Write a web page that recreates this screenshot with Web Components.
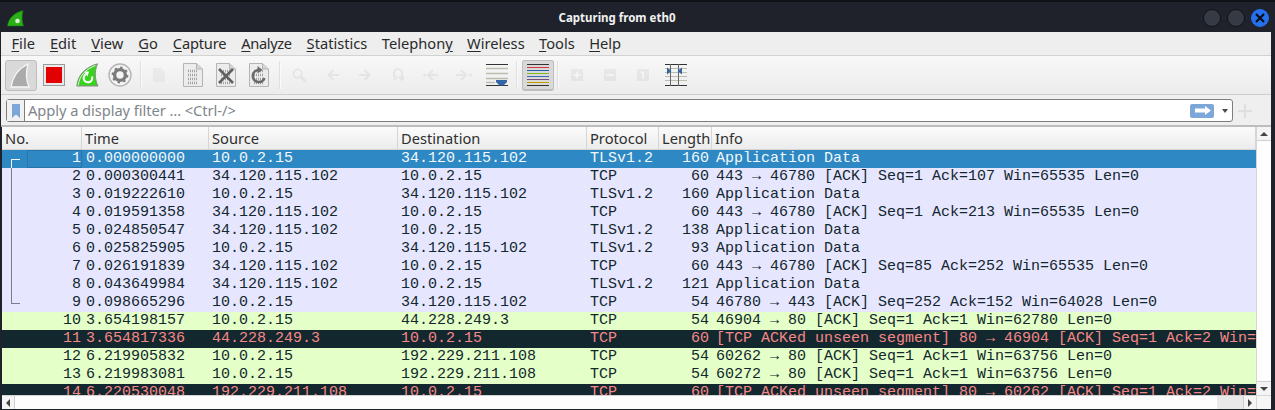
<!DOCTYPE html>
<html>
<head>
<meta charset="utf-8">
<title>Capturing from eth0</title>
<style>
  html, body { margin: 0; padding: 0; height: 410px; overflow: hidden; background: #1f222b; }
  body { display: flex; flex-direction: column; font-family: "Noto Sans", sans-serif; }
</style>
</head>
<body>
<ws-titlebar>Capturing from eth0</ws-titlebar>
<ws-menubar items="File:F,Edit:E,View:V,Go:G,Capture:C,Analyze:A,Statistics:S,Telephony:y,Wireless:W,Tools:T,Help:H"></ws-menubar>
<ws-toolbar></ws-toolbar>
<ws-filterbar placeholder="Apply a display filter … &lt;Ctrl-/&gt;"></ws-filterbar>
<ws-packet-list></ws-packet-list>

<script>
const titlebarTemplate = document.createElement("template");
titlebarTemplate.innerHTML = `
  <style>
    :host { display: flex; align-items: center; height: 32px; box-sizing: border-box; flex: none;
      background: #1f222b; border-top: 2px solid #101218; padding: 0 6px 0 7px; }
    svg.logo { width: 17px; height: 17px; flex: none; margin-top: 2px; }
    .title { flex: 1; text-align: center; color: #f2f2f2; font: 700 11.5px "Noto Sans", sans-serif; margin-top: 1px; padding-left: 7px; }
    .btns { display: flex; gap: 6px; margin-top: 1px; }
    .btn { width: 16px; height: 16px; border-radius: 50%; background: #363a44; border: 1px solid #0f1115; }
    .btn.close { background: #2470ee; border-color: #2470ee; display: flex; align-items: center; justify-content: center; }
  </style>
  <svg class="logo" viewBox="0 0 17 17">
    <path d="M0.5 16 C1 9 7 2.500 16 .5 C14.500 6 15 12 16.500 16 Z" fill="#2bb018" stroke="#0f7a0a" stroke-width=".6"/>
    <circle cx="10.500" cy="11" r="2.300" fill="#d9f2d0"/>
  </svg>
  <div class="title"><slot></slot></div>
  <div class="btns">
    <div class="btn"></div>
    <div class="btn"></div>
    <div class="btn close">
      <svg width="10" height="10" viewBox="0 0 10 10"><path d="M1 1L9 9M9 1L1 9" stroke="#0b0d12" stroke-width="2.2"/></svg>
    </div>
  </div>
`;

class WsTitlebar extends HTMLElement {
  constructor() {
    super();
    this.attachShadow({ mode: "open" });
    this.shadowRoot.appendChild(titlebarTemplate.content.cloneNode(true));
  }
}
customElements.define("ws-titlebar", WsTitlebar);

class WsMenubar extends HTMLElement {
  constructor() {
    super();
    this.attachShadow({ mode: "open" });
    const items = this.getAttribute("items").split(",").map((s) => {
      const [label, key] = s.split(":");
      const i = label.indexOf(key);
      return `<span class="item">${label.slice(0, i)}<u>${label[i]}</u>${label.slice(i + 1)}</span>`;
    });
    this.shadowRoot.innerHTML = `
      <style>
        :host { display: flex; align-items: center; flex: none; height: 24px; box-sizing: border-box;
          margin: 0 4px 0 1px; background: #eeeeee; border-bottom: 1px solid #d2d2d2; padding: 0 0 1px 10.5px; gap: 15px;
          font: 14.67px "Noto Sans", sans-serif; color: #2a2a2a; }
        u { text-underline-offset: 2px; }
        /* hinted widths of the original font are a bit narrower on these */
        .item:nth-of-type(5) { letter-spacing: -.2px; }
        .item:nth-of-type(6) { letter-spacing: -.4px; }
        .item:nth-of-type(n+8) { margin-left: -.6px; }
      </style>
      ${items.join("")}`;
  }
}
customElements.define("ws-menubar", WsMenubar);

function doc(extra) {
  let bits = "";
  for (let y = 8; y < 21; y += 4) {
    bits += `<path d="M5 ${y}H15" stroke="#a2a2a2" stroke-width="2.400" stroke-dasharray="1 1"/>`;
  }
  return `<path d="M.5 .5H13.500L19.500 6V23.500H.5Z" fill="#ececec" stroke="#b4b4b4"/><path d="M13.500 .5V6H19.500" fill="#d5d5d5" stroke="#b4b4b4"/>${bits}${extra}`;
}

const toolbarTemplate = document.createElement("template");
toolbarTemplate.innerHTML = `
  <style>
    :host { display: flex; align-items: center; flex: none; height: 39px; box-sizing: border-box;
      margin: 0 4px 0 1px; padding: 0 0 0 4px; border-bottom: 1px solid #cfcfcf;
      background: linear-gradient(#f8f8f8, #ececec); }
    .b { flex: none; display: flex; align-items: center; justify-content: center; box-sizing: border-box; }
    .on { width: 32px; height: 31px; background: #d9d9d9; border: 1px solid #bdbdbd; border-radius: 3px; }
    .sep { width: 2px; height: 28px; background: #e0e0e0; border-right: 1px solid #fafafa; box-sizing: border-box; flex: none; }
    .faint { opacity: .09; }
  </style>
  <div class="b on">
    <svg width="30" height="29" viewBox="0 0 30 29"><path d="M5 26 C7 14 14 7 22 3 C20 10 20 19 23 26Z" fill="#ababab" stroke="#f6f6f6" stroke-width="1.300"/></svg>
  </div>
  <div class="b" style="margin-left:6px">
    <svg width="22" height="22" viewBox="0 0 22 22"><rect x=".5" y=".5" width="21" height="21" fill="#e9e9e9" stroke="#9a9a9a"/><rect x="3" y="3" width="16" height="16" fill="#e30000"/></svg>
  </div>
  <div class="b" style="margin-left:11px">
    <svg width="23" height="24" viewBox="0 0 23 24">
      <path d="M.8 23 C2 12 9 4.500 21.500 .8 C18.500 8 18.500 16 22 23Z" fill="#36d41c" stroke="#8a8a8a" stroke-width="1"/>
      <path d="M2.200 22.300 C3.500 12.500 10 6 19.500 2.500" fill="none" stroke="#fff" stroke-width=".8"/>
      <path d="M16 13.500 A4.300 4.300 0 1 1 10.500 11" fill="none" stroke="#fff" stroke-width="2"/>
      <path d="M8.500 8.500 L13 8.500 L11.500 13.500Z" fill="#fff"/>
    </svg>
  </div>
  <div class="b" style="margin-left:9px">
    <svg width="24" height="24" viewBox="0 0 24 24">
      <circle cx="12" cy="12" r="11" fill="#f4f4f4" stroke="#b5b5b5" stroke-width="1.400"/>
      <circle cx="12" cy="12" r="5.400" fill="none" stroke="#7b7b7b" stroke-width="3.400"/>
      <circle cx="12" cy="12" r="7.400" fill="none" stroke="#7b7b7b" stroke-width="2" stroke-dasharray="2.400 3.400"/>
    </svg>
  </div>
  <div class="sep" style="margin-left:8px"></div>
  <div class="b faint" style="margin-left:11px">
    <svg width="12" height="14" viewBox="0 0 12 14"><path d="M0 0H8L12 4V14H0Z" fill="#999"/></svg>
  </div>
  <div class="b" style="margin-left:18px"><svg width="20" height="24" viewBox="0 0 20 24">${doc("")}</svg></div>
  <div class="b" style="margin-left:13px"><svg width="20" height="24" viewBox="0 0 20 24">${doc('<path d="M3 6L17 20M17 6L3 20" stroke="#606060" stroke-width="2.600"/>')}</svg></div>
  <div class="b" style="margin-left:13px"><svg width="20" height="24" viewBox="0 0 20 24">${doc('<path d="M15.500 15 A6 6 0 1 1 10 7" fill="none" stroke="#6a6a6a" stroke-width="2.600"/><path d="M8.500 3 L13.500 7 L8.500 10.500Z" fill="#6a6a6a"/>')}</svg></div>
  <div class="sep" style="margin-left:10px"></div>
  <div class="b faint" style="margin-left:11px"><svg width="14" height="14" viewBox="0 0 14 14"><circle cx="5.500" cy="5.500" r="4.200" fill="none" stroke="#666" stroke-width="2"/><path d="M8.500 8.500L13.500 13.500" stroke="#666" stroke-width="2.500"/></svg></div>
  <div class="b faint" style="margin-left:21px"><svg width="12" height="12" viewBox="0 0 12 12"><path d="M12 6H2M6.500 1L1.500 6L6.500 11" fill="none" stroke="#666" stroke-width="2"/></svg></div>
  <div class="b faint" style="margin-left:20px"><svg width="12" height="12" viewBox="0 0 12 12"><path d="M0 6H10M5.500 1L10.500 6L5.500 11" fill="none" stroke="#666" stroke-width="2"/></svg></div>
  <div class="b faint" style="margin-left:21px"><svg width="12" height="14" viewBox="0 0 12 14"><path d="M2 9V5A4 4 0 0 1 10 5V11M7 8.500L10 12L13 8.500M5 8.500L2 12" fill="none" stroke="#666" stroke-width="2"/></svg></div>
  <div class="b faint" style="margin-left:19px"><svg width="15" height="12" viewBox="0 0 15 12"><circle cx="1.500" cy="6" r="1.500" fill="#666"/><path d="M15 6H6M10 1L5 6L10 11" fill="none" stroke="#666" stroke-width="2"/></svg></div>
  <div class="b faint" style="margin-left:18px"><svg width="16" height="12" viewBox="0 0 16 12"><circle cx="14.500" cy="6" r="1.500" fill="#666"/><path d="M0 6H9M5 1L10 6L5 11" fill="none" stroke="#666" stroke-width="2"/></svg></div>
  <div class="b" style="margin-left:14px">
    <svg width="22" height="22" viewBox="0 0 22 22">
      <path d="M0 .5H22M0 21.500H22" stroke="#333"/>
      <path d="M0 4.500H22M0 9.500H22M0 14.500H22" stroke="#bcbcb0" stroke-width="1.400"/>
      <path d="M0 18.500H9" stroke="#bcbcb0" stroke-width="1.400"/>
      <path d="M10 16H21V18L17.500 21.500H13.500L10 18Z" fill="#3465a4"/>
    </svg>
  </div>
  <div class="sep" style="margin-left:8px"></div>
  <div class="b on" style="margin-left:4px;border-bottom-width:2px">
    <svg width="22" height="22" viewBox="0 0 22 22">
      <path d="M0 .5H22M0 21.500H22" stroke="#333"/>
      <path d="M0 3.500H22" stroke="#d23b3b"/><path d="M0 6.500H22" stroke="#2d62ad"/>
      <path d="M0 9.500H22" stroke="#7dbb1c"/><path d="M0 12.500H22" stroke="#3b6fb5"/>
      <path d="M0 15.500H22" stroke="#75507b"/><path d="M0 18.500H22" stroke="#c4a000"/>
    </svg>
  </div>
  <div class="sep" style="margin-left:3px"></div>
  <div class="b faint" style="margin-left:12px"><svg width="12" height="12" viewBox="0 0 12 12"><rect width="12" height="12" fill="#777"/><path d="M6 2.500V9.500M2.500 6H9.500" stroke="#fff" stroke-width="2.200"/></svg></div>
  <div class="b faint" style="margin-left:21px"><svg width="12" height="12" viewBox="0 0 12 12"><rect width="12" height="12" fill="#777"/><path d="M2.500 6H9.500" stroke="#fff" stroke-width="2.200"/></svg></div>
  <div class="b faint" style="margin-left:21px"><svg width="12" height="12" viewBox="0 0 12 12"><rect width="12" height="12" fill="#777"/><path d="M6 2.500V9.500M4 4L6 2.500" stroke="#fff" stroke-width="2"/></svg></div>
  <div class="b" style="margin-left:16px">
    <svg width="22" height="22" viewBox="0 0 22 22">
      <path d="M0 .5H22M0 21.500H22" stroke="#333"/>
      <path d="M0 4.500H22M0 8.500H22M0 12.500H22M0 16.500H22" stroke="#bcbcb0"/>
      <path d="M5.500 0V22M13.500 0V22" stroke="#666" stroke-width="1"/>
      <path d="M2 3.500L6.500 7L2 10.500Z" fill="#3465a4"/>
      <path d="M17 3.500L12.500 7L17 10.500Z" fill="#3465a4"/>
    </svg>
  </div>
`;

class WsToolbar extends HTMLElement {
  constructor() {
    super();
    this.attachShadow({ mode: "open" });
    this.shadowRoot.appendChild(toolbarTemplate.content.cloneNode(true));
  }
}
customElements.define("ws-toolbar", WsToolbar);

const filterTemplate = document.createElement("template");
filterTemplate.innerHTML = `
  <style>
    :host { display: flex; align-items: center; flex: none; height: 32px; box-sizing: border-box; margin: 0 4px 0 1px;
      background: #efefef; padding: 1px 19px 0 5px; border-bottom: 2px solid #bdbdbd; }
    .box { flex: 1; height: 23px; box-sizing: border-box; display: flex; align-items: center; background: #fff;
      border: 1px solid #7d7d7d; border-radius: 3px; }
    .mark { width: 18px; height: 21px; border-right: 1px solid #7d7d7d; box-sizing: border-box; display: flex; align-items: center; justify-content: center; background: #f1f1f1; flex: none; }
    .text { flex: 1; padding: 0 0 2px 3px; color: #80858a; font: 14.67px "Noto Sans", sans-serif; letter-spacing: -.05px; }
    .go { width: 24px; height: 14px; background: #7ca7d8; border-radius: 2px; display: flex; align-items: center; justify-content: center; flex: none; margin-right: 8px; }
    .drop { width: 0; height: 0; border: 3px solid transparent; border-top: 4px solid #4a4a4a; border-bottom: 0; flex: none; margin-right: 4px; }
    .plus { flex: none; margin-left: 5px; opacity: .1; }
  </style>
  <div class="box">
    <div class="mark"><svg width="8" height="14" viewBox="0 0 8 14"><path d="M0 0H8V14L4 10.500L0 14Z" fill="#7ca7d8"/></svg></div>
    <div class="text"></div>
    <div class="go"><svg width="17" height="9" viewBox="0 0 17 9"><path d="M1 2.500H11V0L17 4.500L11 9V6.500H1Z" fill="#fff"/></svg></div>
    <div class="drop"></div>
  </div>
  <svg class="plus" width="14" height="14" viewBox="0 0 14 14"><path d="M7 0V14M0 7H14" stroke="#555" stroke-width="2"/></svg>
`;

class WsFilterbar extends HTMLElement {
  constructor() {
    super();
    this.attachShadow({ mode: "open" });
    this.shadowRoot.appendChild(filterTemplate.content.cloneNode(true));
    this.shadowRoot.querySelector(".text").textContent = this.getAttribute("placeholder");
  }
}
customElements.define("ws-filterbar", WsFilterbar);

const COLUMNS = "80px 127px 189px 189px 72px 53px 1fr";

const rowTemplate = document.createElement("template");
rowTemplate.innerHTML = `
  <style>
    :host { display: grid; grid-template-columns: ${COLUMNS}; height: 18px; flex: none;
      font: 15px/18px "Liberation Mono", monospace; white-space: nowrap; overflow: hidden;
      background: var(--bg); color: var(--fg); }
    .no { position: relative; text-align: right; padding-right: 1px; }
    .no span { position: relative; }
    .time { padding-left: 4px; }
    .cell { padding-left: 3px; overflow: hidden; }
    .len { text-align: right; overflow: hidden; padding-right: 3px; }
    .info { padding-left: 4px; overflow: hidden; }
    .focus { display: none; position: absolute; left: 25px; right: 0; top: 0; bottom: 0; border: 1px solid #2775a8; }
    :host([focused]) .focus { display: block; }
    .rel { position: absolute; left: 9px; top: 0; bottom: 0; width: 9px; box-sizing: border-box; }
    :host([rel="first"]) .rel { top: 9px; border-top: 1px solid var(--rel); border-left: 1px solid var(--rel); }
    :host([rel="mid"]) .rel { border-left: 1px solid var(--rel); }
    :host([rel="last"]) .rel { bottom: 8px; border-bottom: 1px solid var(--rel); border-left: 1px solid var(--rel); }
  </style>
  <div class="no"><i class="rel"></i><i class="focus"></i><span></span></div>
  <div class="time"></div>
  <div class="cell src"></div>
  <div class="cell dst"></div>
  <div class="cell proto"></div>
  <div class="len"></div>
  <div class="info"></div>
`;

class WsPacketRow extends HTMLElement {
  constructor() {
    super();
    this.attachShadow({ mode: "open" });
    this.shadowRoot.appendChild(rowTemplate.content.cloneNode(true));
  }
  set packet(p) {
    const root = this.shadowRoot;
    root.querySelector(".no span").textContent = p[0];
    root.querySelector(".time").textContent = p[1];
    root.querySelector(".src").textContent = p[2];
    root.querySelector(".dst").textContent = p[3];
    root.querySelector(".proto").textContent = p[4];
    root.querySelector(".len").textContent = p[5];
    root.querySelector(".info").textContent = p[6];
  }
}
customElements.define("ws-packet-row", WsPacketRow);

const PALETTE = {
  sel: ["#2d88c4", "#f4f8fb", "#f4f8fb"],
  tls: ["#e7e6ff", "#12272e", "#7d7d8a"],
  ok: ["#e4ffc7", "#12272e", "#7d7d8a"],
  bad: ["#12272e", "#f78787", "#7d7d8a"],
};

const A = "34.120.115.102", L = "10.0.2.15";
const PACKETS = [
  ["sel", "first", 1, "0.000000000", L, A, "TLSv1.2", 160, "Application Data"],
  ["tls", "mid", 2, "0.000300441", A, L, "TCP", 60, "443 → 46780 [ACK] Seq=1 Ack=107 Win=65535 Len=0"],
  ["tls", "mid", 3, "0.019222610", L, A, "TLSv1.2", 160, "Application Data"],
  ["tls", "mid", 4, "0.019591358", A, L, "TCP", 60, "443 → 46780 [ACK] Seq=1 Ack=213 Win=65535 Len=0"],
  ["tls", "mid", 5, "0.024850547", A, L, "TLSv1.2", 138, "Application Data"],
  ["tls", "mid", 6, "0.025825905", L, A, "TLSv1.2", 93, "Application Data"],
  ["tls", "mid", 7, "0.026191839", A, L, "TCP", 60, "443 → 46780 [ACK] Seq=85 Ack=252 Win=65535 Len=0"],
  ["tls", "mid", 8, "0.043649984", A, L, "TLSv1.2", 121, "Application Data"],
  ["tls", "last", 9, "0.098665296", L, A, "TCP", 54, "46780 → 443 [ACK] Seq=252 Ack=152 Win=64028 Len=0"],
  ["ok", "", 10, "3.654198157", L, "44.228.249.3", "TCP", 54, "46904 → 80 [ACK] Seq=1 Ack=1 Win=62780 Len=0"],
  ["bad", "", 11, "3.654817336", "44.228.249.3", L, "TCP", 60, "[TCP ACKed unseen segment] 80 → 46904 [ACK] Seq=1 Ack=2 Win=65535 Len=0"],
  ["ok", "", 12, "6.219905832", L, "192.229.211.108", "TCP", 54, "60262 → 80 [ACK] Seq=1 Ack=1 Win=63756 Len=0"],
  ["ok", "", 13, "6.219983081", L, "192.229.211.108", "TCP", 54, "60272 → 80 [ACK] Seq=1 Ack=1 Win=63756 Len=0"],
  ["bad", "", 14, "6.220530048", "192.229.211.108", L, "TCP", 60, "[TCP ACKed unseen segment] 80 → 60262 [ACK] Seq=1 Ack=2 Win=65535 Len=0"],
];

const listTemplate = document.createElement("template");
listTemplate.innerHTML = `
  <style>
    :host { display: grid; grid-template-columns: 1fr 15px; grid-template-rows: 1fr 14px; flex: 1; min-height: 0;
      margin: 0 4px 1px 2px; background: #fff; }
    .main { display: flex; flex-direction: column; min-height: 0; min-width: 0; overflow: hidden; }
    .head { display: grid; grid-template-columns: ${COLUMNS}; height: 23px; flex: none; box-sizing: border-box;
      background: linear-gradient(#fbfbfb, #ececec); border-bottom: 1px solid #d5d5d5;
      font: 14.67px/23px "Noto Sans", sans-serif; color: #2e2e2e; }
    .head div { padding-left: 3px; border-right: 1px solid #d5d5d5; box-sizing: border-box; white-space: nowrap; overflow: hidden; }
    .rows { flex: 1; min-height: 0; overflow: hidden; display: flex; flex-direction: column; }
    .vbar { display: flex; flex-direction: column; justify-content: space-between; background: #fdfdfd; border-left: 1px solid #d5d5d5; }
    .arrow { display: flex; align-items: center; justify-content: center; height: 14px; background: #f4f4f4; box-sizing: border-box; flex: none; }
    .vbar .top { border-bottom: 1px solid #cfcfcf; }
    .vbar .bot { border-top: 1px solid #cfcfcf; }
    .hbar { display: flex; background: #fdfdfd; border-top: 1px solid #d5d5d5; }
    .hbar .arrow { width: 13px; height: 100%; }
    .hbar .lft { border-right: 1px solid #cfcfcf; }
    .hbar .rgt { border-left: 1px solid #cfcfcf; }
    .hbar .fill { flex: 1; }
    .hbar .track { width: 26px; background: #e9e9e9; }
    .corner { background: #f6f6f6; border-top: 1px solid #d5d5d5; border-left: 1px solid #d5d5d5; }
    .up { width: 0; height: 0; border: 4px solid transparent; border-bottom: 4px solid #444; border-top: 0; }
    .down { width: 0; height: 0; border: 4px solid transparent; border-top: 4px solid #444; border-bottom: 0; }
    .left { width: 0; height: 0; border: 4px solid transparent; border-right: 4px solid #444; border-left: 0; }
    .right { width: 0; height: 0; border: 4px solid transparent; border-left: 4px solid #444; border-right: 0; }
  </style>
  <div class="main">
    <div class="head"><div>No.</div><div>Time</div><div>Source</div><div>Destination</div><div>Protocol</div><div>Length</div><div>Info</div></div>
    <div class="rows"></div>
  </div>
  <div class="vbar"><div class="arrow top"><i class="up"></i></div><div class="arrow bot"><i class="down"></i></div></div>
  <div class="hbar"><div class="arrow lft"><i class="left"></i></div><div class="fill"></div><div class="track"></div><div class="arrow rgt"><i class="right"></i></div></div>
  <div class="corner"></div>
`;

class WsPacketList extends HTMLElement {
  constructor() {
    super();
    this.attachShadow({ mode: "open" });
    this.shadowRoot.appendChild(listTemplate.content.cloneNode(true));
    const rows = this.shadowRoot.querySelector(".rows");
    PACKETS.forEach((p) => {
      const row = document.createElement("ws-packet-row");
      const [bg, fg, rel] = PALETTE[p[0]];
      row.style.setProperty("--bg", bg);
      row.style.setProperty("--fg", fg);
      row.style.setProperty("--rel", rel);
      if (p[1]) row.setAttribute("rel", p[1]);
      if (p[0] === "sel") row.setAttribute("focused", "");
      row.packet = p.slice(2);
      rows.appendChild(row);
    });
  }
}
customElements.define("ws-packet-list", WsPacketList);
</script>
</body>
</html>
